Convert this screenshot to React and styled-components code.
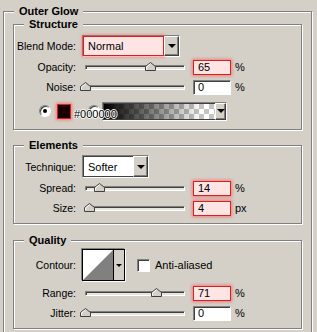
import styled, { createGlobalStyle, css } from "styled-components";

const GlobalStyle = createGlobalStyle`
  html, body {
    margin: 0;
    padding: 0;
    background: #d4d0c8;
  }
  body {
    width: 317px;
    height: 332px;
    overflow: hidden;
    font-family: "Liberation Sans", Arial, sans-serif;
    font-size: 10.5px;
    color: #000;
  }
`;

const sunken = css`
  border: 1px solid;
  border-color: #808080 #fff #fff #808080;
  box-shadow: inset 1px 1px 0 #404040;
`;

const glow = css`
  border: 1px solid #d42222;
  box-shadow: 0 0 3px 1px rgba(255, 70, 70, 0.6);
`;

// whole panel
const Page = styled.div`
  padding: 11px 0 0 3px;
`;

// etched group frame with caption on its top edge
const Group = styled.section`
  position: relative;
  box-sizing: border-box;
  width: ${(p) => p.$w}px;
  padding: ${(p) => p.$pad};
  margin-top: ${(p) => p.$mt || 0}px;
  border: 1px solid #808080;
  box-shadow: inset 1px 1px 0 #fff, 1px 1px 0 #fff;
`;

const Caption = styled.div`
  position: absolute;
  top: -8px;
  left: 10px;
  padding: 0 5px;
  line-height: 14px;
  font-size: 11px;
  font-weight: bold;
  background: #d4d0c8;
`;

const Row = styled.div`
  display: flex;
  align-items: center;
  height: ${(p) => p.$h}px;
  margin-top: ${(p) => p.$mt || 0}px;
`;

const Label = styled.div`
  flex: none;
  width: 62px;
  margin-right: 6px;
  text-align: right;
`;

// slider groove
const Track = styled.div`
  position: relative;
  flex: none;
  box-sizing: border-box;
  width: 100px;
  height: 5px;
  margin-left: 3px;
  background: #e6e4de;
  border: 1px solid;
  border-color: #808080 #fff #fff #808080;
  box-shadow: inset 1px 1px 0 #404040;
`;

const Thumb = styled.svg`
  position: absolute;
  top: -4px;
`;

const Field = styled.input`
  flex: none;
  box-sizing: border-box;
  width: 38px;
  height: 15px;
  margin: 0 0 0 8px;
  padding: 0 0 0 4px;
  font-family: inherit;
  font-size: 11px;
  color: #000;
  outline: none;
  ${(p) =>
    p.$hot
      ? css`
          background: #ffe4e4;
          ${glow}
        `
      : css`
          background: #fff;
          ${sunken}
        `}
`;

const Unit = styled.span`
  margin-left: 4px;
  font-size: 11px;
`;

const SelectBox = styled.div`
  display: flex;
  box-sizing: border-box;
  height: ${(p) => p.$h}px;
  border: 1px solid;
  border-color: #808080 #fff #fff #808080;
`;

const SelectValue = styled.div`
  display: flex;
  align-items: center;
  box-sizing: border-box;
  width: ${(p) => p.$w}px;
  padding-left: 4px;
  font-size: 11px;
  ${(p) =>
    p.$hot
      ? css`
          background: #ffe4e4;
          ${glow}
        `
      : css`
          background: #fff;
          border: 1px solid #404040;
          border-right: none;
        `}
`;

const DropButton = styled.div`
  display: flex;
  align-items: center;
  justify-content: center;
  box-sizing: border-box;
  width: ${(p) => p.$w || 15}px;
  background: #d4d0c8;
  border: 1px solid;
  border-color: #fff #404040 #404040 #fff;
  box-shadow: inset -1px -1px 0 #808080;

  &::after {
    content: "";
    border-left: 4px solid transparent;
    border-right: 4px solid transparent;
    border-top: 4px solid #000;
  }
`;

const Radio = styled.span`
  position: relative;
  flex: none;
  box-sizing: border-box;
  width: 12px;
  height: 12px;
  margin-left: ${(p) => p.$ml}px;
  border-radius: 50%;
  background: #fff;
  ${sunken}

  ${(p) =>
    p.$on &&
    css`
      &::after {
        content: "";
        position: absolute;
        left: 3px;
        top: 3px;
        width: 4px;
        height: 4px;
        border-radius: 50%;
        background: #000;
      }
    `}
`;

const Swatch = styled.span`
  flex: none;
  box-sizing: border-box;
  width: 14px;
  height: 15px;
  margin-left: 6px;
  background: #1c0000;
  ${glow}
`;

const Hex = styled.span`
  position: relative;
  z-index: 2;
  align-self: flex-end;
  width: 0;
  margin-left: 3px;
  line-height: 14px;
  font-size: 11px;
  white-space: nowrap;
  text-shadow: 1px 0 0 #fff, -1px 0 0 #fff, 0 1px 0 #fff, 0 -1px 0 #fff;
`;

const GradientBox = styled.div`
  display: flex;
  flex: none;
  box-sizing: border-box;
  width: 125px;
  height: 19px;
  margin-left: 2px;
  border: 1px solid;
  border-color: #808080 #fff #fff #808080;
`;

const GradientStrip = styled.div`
  flex: 1;
  border: 1px solid #404040;
  border-right: none;
  background: linear-gradient(to right, #000 0%, rgba(0, 0, 0, 0) 88%),
    conic-gradient(#c4c4c4 25%, #fff 0 50%, #c4c4c4 0 75%, #fff 0) 0 0 / 10px 10px;
`;

const ContourBox = styled.div`
  display: flex;
  flex: none;
  box-sizing: border-box;
  width: 43px;
  height: 32px;
  border: 1px solid #000;
  box-shadow: -1px -1px 0 #808080, 1px 1px 0 #fff;
`;

const ContourArrow = styled.div`
  display: flex;
  align-items: center;
  justify-content: center;
  flex: 1;
  border-left: 1px solid #000;
  background: #d4d0c8;

  &::after {
    content: "";
    border-left: 3px solid transparent;
    border-right: 3px solid transparent;
    border-top: 3px solid #000;
  }
`;

const Check = styled.span`
  flex: none;
  box-sizing: border-box;
  width: 13px;
  height: 13px;
  margin-left: 12px;
  background: #fff;
  ${sunken}
`;

const CheckLabel = styled.span`
  margin-left: 5px;
  font-size: 11px;
`;

function SliderRow({ label, value, unit = "%", hot, mt }) {
  return (
    <Row $h={20} $mt={mt}>
      <Label>{label}</Label>
      <Track>
        <Thumb width="11" height="9" viewBox="0 0 11 9" style={{ left: value - 6 }}>
          <polygon
            points="0.5,8.5 0.5,4.5 5.5,0.5 10.5,4.5 10.5,8.5"
            fill="#d4d0c8"
            stroke="#404040"
          />
          <polyline points="1.5,7.5 1.5,5 5.5,1.8" fill="none" stroke="#fff" />
        </Thumb>
      </Track>
      <Field $hot={hot} readOnly value={String(value)} />
      <Unit>{unit}</Unit>
    </Row>
  );
}

export default function App() {
  return (
    <>
      <GlobalStyle />
      <Page>
        <Group $w={309} $pad="12px 9px 4px 9px">
          <Caption>Outer Glow</Caption>

          <Group $w={289} $pad="10px 0 8px 0">
            <Caption>Structure</Caption>
            <Row $h={22}>
              <Label>Blend Mode:</Label>
              <SelectBox $h={22}>
                <SelectValue $w={81} $hot>
                  Normal
                </SelectValue>
                <DropButton />
              </SelectBox>
            </Row>
            <SliderRow label="Opacity:" value={65} hot />
            <SliderRow label="Noise:" value={0} />
            <Row $h={20} $mt={4}>
              <Radio $ml={25} $on />
              <Swatch />
              <Hex>#000000</Hex>
              <Radio $ml={14} />
              <GradientBox>
                <GradientStrip />
                <DropButton $w={11} />
              </GradientBox>
            </Row>
          </Group>

          <Group $w={289} $pad="9px 0 5px 0" $mt={15}>
            <Caption>Elements</Caption>
            <Row $h={23}>
              <Label>Technique:</Label>
              <SelectBox $h={23}>
                <SelectValue $w={50}>Softer</SelectValue>
                <DropButton />
              </SelectBox>
            </Row>
            <SliderRow label="Spread:" value={14} hot />
            <SliderRow label="Size:" value={4} unit="px" hot />
          </Group>

          <Group $w={289} $pad="8px 0 5px 0" $mt={16}>
            <Caption>Quality</Caption>
            <Row $h={32}>
              <Label>Contour:</Label>
              <ContourBox>
                <svg width="30" height="30" viewBox="0 0 30 30">
                  <rect width="30" height="30" fill="#fff" />
                  <polygon points="0,30 30,0 30,30" fill="#808080" />
                </svg>
                <ContourArrow />
              </ContourBox>
              <Check />
              <CheckLabel>Anti-aliased</CheckLabel>
            </Row>
            <SliderRow label="Range:" value={71} hot mt={2} />
            <SliderRow label="Jitter:" value={0} />
          </Group>
        </Group>
      </Page>
    </>
  );
}
